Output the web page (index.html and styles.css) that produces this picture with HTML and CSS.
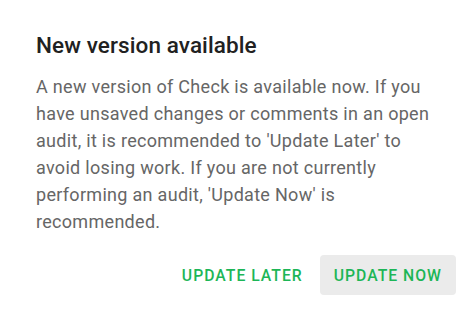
FILE: index.html
```html
<!DOCTYPE html>
<html>
<head>
<meta charset="utf-8">
<link rel="stylesheet" href="styles.css">
</head>
<body>
<div class="dialog">
  <h2 class="title">New version available</h2>
  <p class="content">A new version of Check is available now. If you have unsaved changes or comments in an open audit, it is recommended to 'Update Later' to avoid losing work. If you are not currently performing an audit, 'Update Now' is recommended.</p>
  <div class="actions">
    <button class="btn">UPDATE LATER</button>
    <button class="btn btn-filled">UPDATE NOW</button>
  </div>
</div>
</body>
</html>
```
FILE: styles.css
```css
html, body {
  margin: 0;
  padding: 0;
  background: #ffffff;
}
body {
  font-family: Roboto, "Noto Sans", sans-serif;
  width: 473px;
  height: 312px;
  overflow: hidden;
}
.dialog {
  padding: 29px 17px 0 36px;
}
.title {
  margin: 0;
  font-size: 22.5px;
  font-weight: 500;
  line-height: 32px;
  color: #212121;
  letter-spacing: 0.1px;
}
.content {
  margin: 12px 0 0 0;
  width: 410px;
  font-size: 18px;
  line-height: 27px;
  color: #666666;
  letter-spacing: 0.3px;
}
.actions {
  display: flex;
  justify-content: flex-end;
  gap: 3px;
  margin-top: 20px;
}
.btn {
  font-family: Roboto, "Noto Sans", sans-serif;
  font-size: 15.75px;
  font-weight: 500;
  letter-spacing: 1px;
  color: #1db657;
  background: transparent;
  border: none;
  border-radius: 4px;
  height: 40px;
  padding: 0 14px;
}
.btn-filled {
  background: #ebebeb;
}
```
